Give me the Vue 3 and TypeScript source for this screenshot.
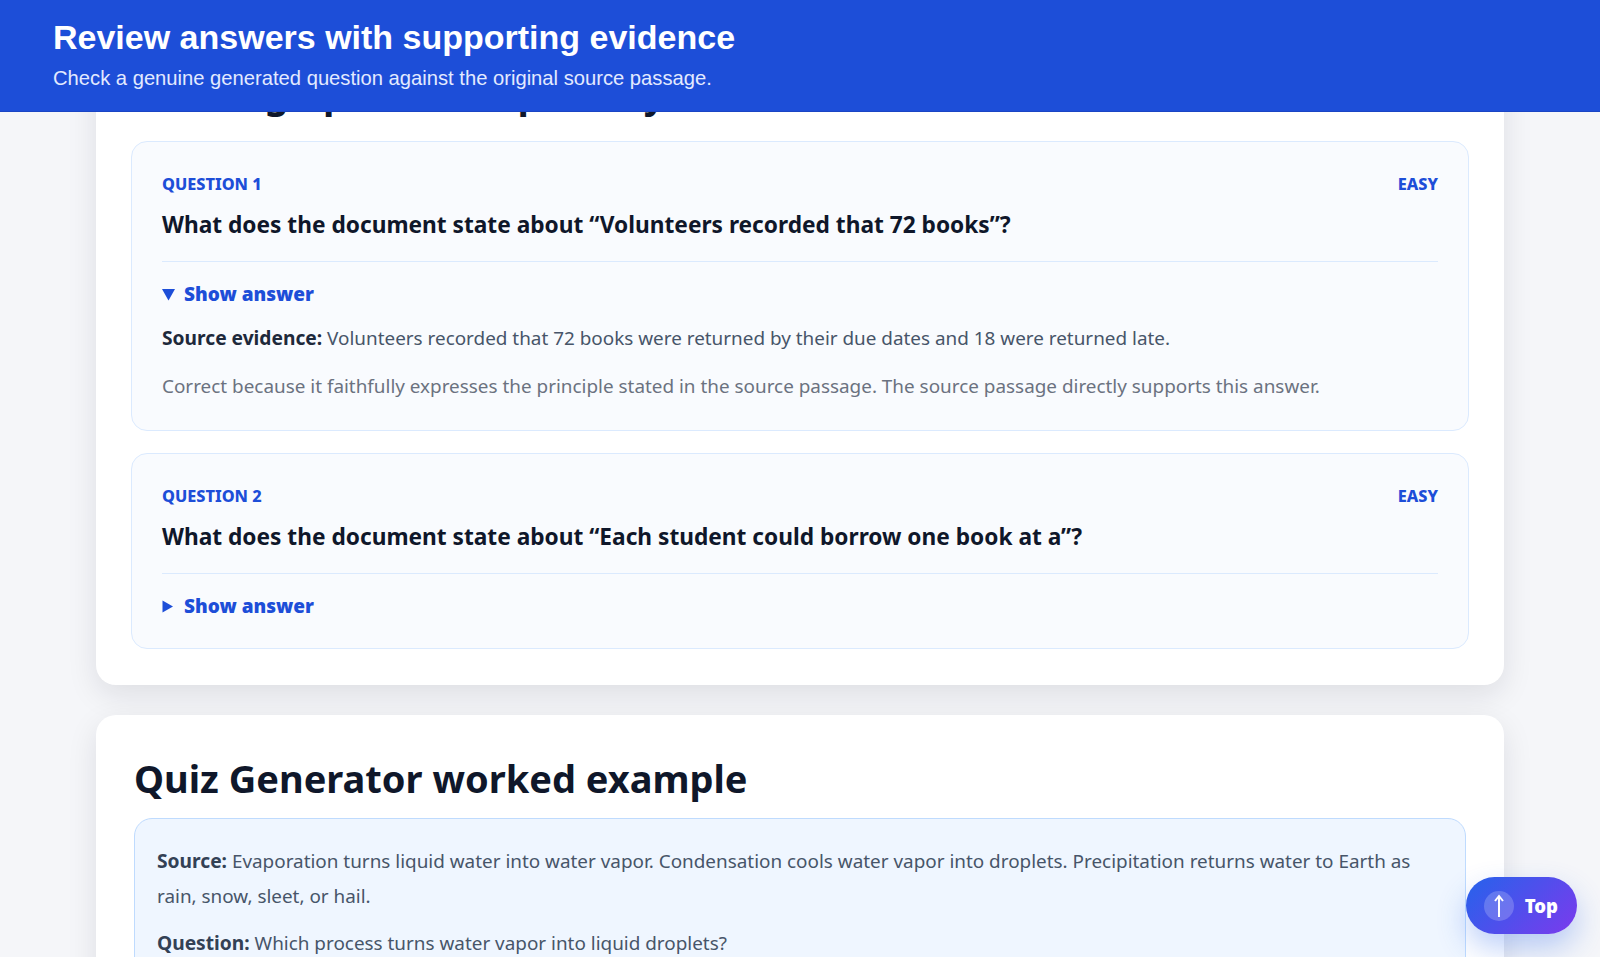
<script setup lang="ts">
interface Q { n: number; level: string; text: string; open: boolean }
const questions: Q[] = [
  { n: 1, level: 'EASY', text: 'What does the document state about “Volunteers recorded that 72 books”?', open: true },
  { n: 2, level: 'EASY', text: 'What does the document state about “Each student could borrow one book at a”?', open: false },
]
</script>

<template>
  <div class="page">
    <header class="top">
      <h1>Review answers with supporting evidence</h1>
      <p>Check a genuine generated question against the original source passage.</p>
    </header>
    <main class="main">
      <section class="card first">
        <h2 class="hidden-title">Reading up on their publicly shared books</h2>
        <article v-for="q in questions" :key="q.n" class="q">
          <div class="meta"><span>QUESTION {{ q.n }}</span><span>{{ q.level }}</span></div>
          <h3>{{ q.text }}</h3>
          <div class="rule"></div>
          <div class="toggle">
            <svg class="tri" viewBox="0 0 13 13">
              <path v-if="q.open" d="M0 1H13L6.500 12.500Z" />
              <path v-else d="M0.500 0.500L11 6.500L0.500 12.500Z" />
            </svg>
            <span>Show answer</span>
          </div>
          <template v-if="q.open">
            <p class="evidence"><strong>Source evidence:</strong> Volunteers recorded that 72 books were returned by their due dates and 18 were returned late.</p>
            <p class="why">Correct because it faithfully expresses the principle stated in the source passage. The source passage directly supports this answer.</p>
          </template>
        </article>
      </section>
      <section class="card second">
        <h2>Quiz Generator worked example</h2>
        <div class="example">
          <p><strong>Source:</strong> Evaporation turns liquid water into water vapor. Condensation cools water vapor into droplets. Precipitation returns water to Earth as rain, snow, sleet, or hail.</p>
          <p><strong>Question:</strong> Which process turns water vapor into liquid droplets?</p>
        </div>
      </section>
    </main>
    <button class="fab">
      <span class="fab-icon"><svg viewBox="0 0 16 26" width="16" height="26"><path d="M8 24V3M4 8L8 3L12 8" fill="none" stroke="#fff" stroke-width="2" /></svg></span>
      <span>Top</span>
    </button>
  </div>
</template>

<style>
html, body { margin: 0; background: #f5f6f9; }
</style>

<style scoped>
.page {
  height: 957px;
  overflow: hidden;
  position: relative;
  background: #f5f6f9;
  font-family: "Noto Sans", "Open Sans", sans-serif;
}
.top {
  position: absolute;
  inset: 0 0 auto 0;
  z-index: 5;
  height: 112px;
  box-sizing: border-box;
  padding: 19px 53px 0;
  background: #1d4ed8;
  border-bottom: 1px solid #1a45c4;
  color: #fff;
  font-family: "Liberation Sans", Arial, sans-serif;
}
.top h1 { margin: 0; font-size: 34px; line-height: 37px; font-weight: 700; }
.top p { margin: 10px 0 0; font-size: 20.2px; line-height: 25px; color: #e3eaff; }
.main { display: flex; flex-direction: column; gap: 30px; padding: 31px 96px 0; }
.card {
  background: #fff;
  border-radius: 20px;
  box-shadow: 0 10px 30px rgba(15, 23, 42, 0.1);
  box-sizing: border-box;
  padding: 34px 35px 36px;
  flex: none;
}
.hidden-title { margin: 0 0 20px 3px; font-size: 38px; line-height: 56px; color: #0f172a; font-weight: 700; white-space: nowrap; }
.q {
  background: #f9fbfe;
  border: 1px solid #dbeafe;
  border-radius: 16px;
  padding: 30px 30px 28px;
  margin-bottom: 22px;
}
.q:last-child { margin-bottom: 0; }
.meta {
  display: flex; justify-content: space-between;
  font-size: 16.3px; line-height: 24px; font-weight: 800; color: #1d4ed8;
}
h3 { margin: 12px 0 19px; font-size: 22.7px; line-height: 34px; font-weight: 700; color: #0f172a; }
.rule { height: 1px; background: #dbeafe; }
.toggle { display: flex; align-items: center; gap: 9px; margin-top: 18px; font-size: 19px; line-height: 28px; font-weight: 900; color: #1d4ed8; }
.tri { width: 13px; height: 13px; fill: #1d4ed8; }
.evidence, .why { margin: 0; font-size: 18.9px; line-height: 32px; color: #475569; }
.evidence { margin-top: 14px; }
.evidence strong { color: #1e293b; font-size: 19.2px; }
.why { margin-top: 16px; color: #6b7280; }
.second { padding: 35px 38px; }
.second h2 { margin: 0 0 12px; font-size: 38px; line-height: 56px; color: #0f172a; font-weight: 700; }
.example {
  background: #eff6ff;
  border: 1px solid #bfdbfe;
  border-radius: 18px;
  padding: 24px 22px;
}
.example p { margin: 0 0 11px; font-size: 18.9px; line-height: 35px; color: #475569; }
.example strong { color: #334155; font-size: 19.2px; }
.fab {
  position: absolute;
  right: 23px;
  bottom: 23px;
  z-index: 6;
  display: flex;
  align-items: center;
  gap: 11px;
  height: 57px;
  padding: 0 19px 0 18px;
  border: 0;
  border-radius: 29px;
  background: linear-gradient(135deg, #2563eb, #7c3aed);
  box-shadow: 0 14px 30px rgba(37, 99, 235, 0.3);
  color: #fff;
  font: 900 18.5px "Noto Sans", sans-serif;
}
.fab-icon { width: 30px; height: 30px; border-radius: 50%; background: rgba(255,255,255,.2); display: flex; align-items: center; justify-content: center; }
</style>
